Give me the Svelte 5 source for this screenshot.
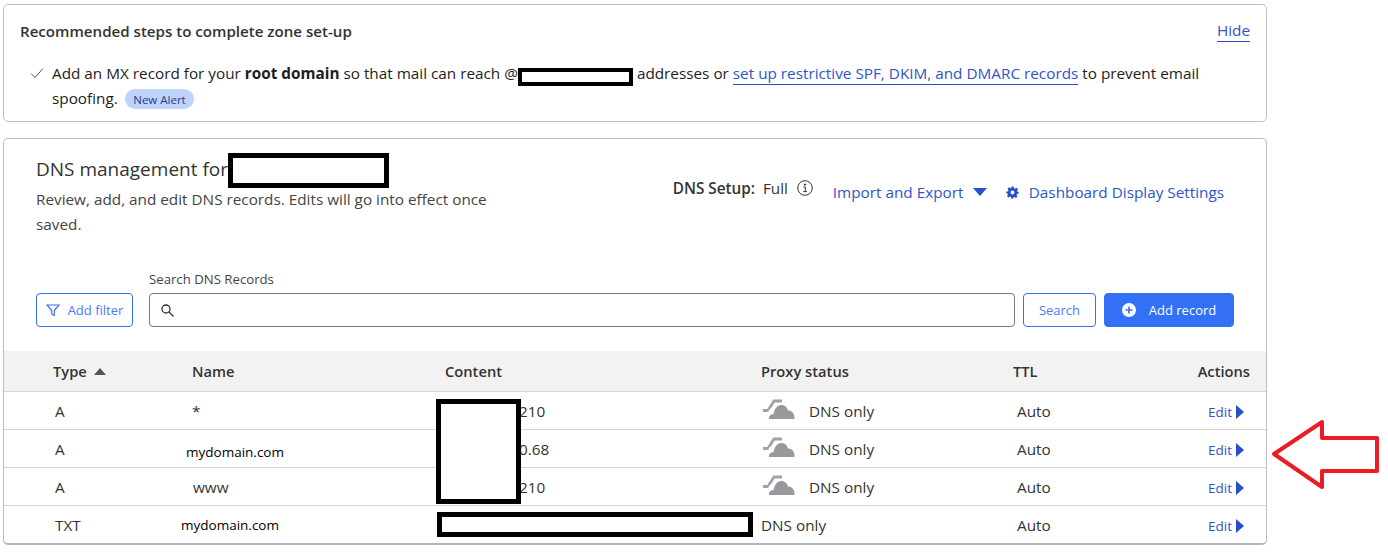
<script>
  const rows = [
    { type: 'A', name: '*', content: '210', proxied: true },
    { type: 'A', name: 'mydomain.com', content: '0.68', proxied: true, pasted: true },
    { type: 'A', name: 'www', content: '210', proxied: true },
    { type: 'TXT', name: 'mydomain.com', content: '', proxied: false, pasted: true, txt: true }
  ];
</script>

<div class="page">
  <section class="card steps">
    <div class="steps-head">
      <h2>Recommended steps to complete zone set-up</h2>
      <a href="#hide" class="link underlined">Hide</a>
    </div>
    <div class="step">
      <svg class="check" width="14" height="12" viewBox="0 0 14 12" fill="none" stroke="#555" stroke-width="1">
        <path d="M1 6.5 L5 10.5 L13 1.5" />
      </svg>
      <p>
        Add an MX record for your <b>root domain</b> so that mail can reach @<span class="hidden-domain"></span> addresses or
        <a href="#spf" class="link underlined">set up restrictive SPF, DKIM, and DMARC records</a> to prevent email
        spoofing. <span class="pill">New Alert</span>
      </p>
    </div>
  </section>

  <section class="card dns">
    <div class="dns-head">
      <div class="intro">
        <h1>DNS management for<span class="redact title-redact"></span></h1>
        <p>Review, add, and edit DNS records. Edits will go into effect once saved.</p>
      </div>
      <div class="head-actions">
        <span class="setup"><b>DNS Setup:</b>&nbsp; Full
          <svg width="16" height="16" viewBox="0 0 16 16" fill="none" stroke="#333" stroke-width="1">
            <circle cx="8" cy="8" r="7.300" />
            <path d="M6.500 7 H8.300 V11.600 M6.300 11.600 H10" />
            <circle cx="8" cy="4.600" r="0.700" fill="#333" />
          </svg>
        </span>
        <a href="#import" class="link action import">Import and Export
          <svg width="14" height="8" viewBox="0 0 14 8"><path d="M0 0 H14 L7 8 Z" fill="#2450c8" /></svg>
        </a>
        <a href="#settings" class="link action settings">
          <svg width="13" height="13" viewBox="0 0 24 24">
            <path fill="#2450c8" fill-rule="evenodd" d="M10 1h4l.7 3.200 1.900.8 2.800-1.800 2.800 2.800-1.800 2.800.8 1.900L23.400 10.400v3.600l-3.200.7-.8 1.900 1.800 2.800-2.800 2.800-2.800-1.800-1.900.8L13 23.400h-3l-.7-3.200-1.900-.8-2.800 1.800-2.800-2.800 1.800-2.800-.8-1.900L.6 14v-3.600l3.200-.7.8-1.900L2.800 5 5.600 2.200l2.800 1.800 1.900-.8zM12 8.500a3.600 3.600 0 1 0 0 7.200 3.600 3.600 0 0 0 0-7.200z" />
          </svg>
          Dashboard Display Settings
        </a>
      </div>
    </div>

    <div class="search-row">
      <button class="btn filter">
        <svg width="14" height="14" viewBox="0 0 14 14" fill="none" stroke="#3a6ff5" stroke-width="1.200">
          <path d="M1 2 H13 L8.300 7.500 V12.500 L5.700 11 V7.500 Z" />
        </svg>
        Add filter
      </button>
      <div class="search-field">
        <label for="search">Search DNS Records</label>
        <div class="input">
          <svg width="15" height="15" viewBox="0 0 15 15" fill="none" stroke="#333" stroke-width="1.300">
            <circle cx="6" cy="6" r="4" />
            <path d="M9 9 L13.500 13.500" />
          </svg>
          <input id="search" type="text" />
        </div>
      </div>
      <button class="btn search">Search</button>
      <button class="btn add">
        <svg width="14" height="14" viewBox="0 0 14 14">
          <circle cx="7" cy="7" r="7" fill="#fff" />
          <path d="M7 3.500 V10.500 M3.500 7 H10.500" stroke="#3370f5" stroke-width="1.600" />
        </svg>
        Add record
      </button>
    </div>

    <div class="table">
      <div class="tr th">
        <span class="type-head">Type <i class="sort"></i></span>
        <span>Name</span>
        <span>Content</span>
        <span>Proxy status</span>
        <span>TTL</span>
        <span class="right">Actions</span>
      </div>
      {#each rows as row}
        <div class="tr td">
          <span class="type">{row.type}</span>
          <span class="name" class:pasted={row.pasted} class:txt={row.txt} class:www={row.name === 'www'}>{row.name}</span>
          <span class="content">{row.content}</span>
          <span class="proxy">
            {#if row.proxied}
              <svg class="cloud" width="32" height="22" viewBox="0 0 32 22">
                <path d="M0 12.500 L5 12.500 L11 3 L19 3" fill="none" stroke="#a0a2a5" stroke-width="2.800" />
                <path fill="#fff" d="M3 22 L6 12 L14 5 L24 6 L32 12 V22 Z" />
                <path fill="#97999c" d="M6 21 C5.500 18 8 16 10.500 16.300 C11.500 11 14 7 18.500 7 C22 7 24.500 9.500 25 12.500 C29 12 32 16 31.500 21 Z" />
              </svg>
            {/if}
            DNS only
          </span>
          <span class="ttl">Auto</span>
          <span class="right edit"><a href="#edit" class="link">Edit</a><i class="caret"></i></span>
        </div>
      {/each}
      <span class="redact ip-redact"></span>
      <span class="redact txt-redact"></span>
    </div>
  </section>

  <svg class="arrow" width="110" height="72" viewBox="0 0 110 72" fill="none" stroke="#ed1c24" stroke-width="4" stroke-linejoin="round">
    <path d="M3 35 L51 3 V19 H106 V52 H51 V68 Z" />
  </svg>
</div>

<style>
  :global(body) {
    margin: 0;
    background: #fff;
  }

  .page {
    position: relative;
    width: 1388px;
    height: 554px;
    padding: 4px 0 0 3px;
    box-sizing: border-box;
    font-family: "Open Sans", "Noto Sans", sans-serif;
    color: #222;
    font-size: 15.300px;
    overflow: hidden;
  }

  .card {
    width: 1264px;
    box-sizing: border-box;
    border: 1px solid #bdbdbd;
    border-radius: 5px;
    background: #fff;
  }

  .link {
    color: #2f55c5;
    text-decoration: none;
  }

  .underlined {
    border-bottom: 1px solid #2450c8;
    padding-bottom: 1px;
  }

  /* Recommended steps */
  .steps {
    height: 118px;
    padding: 16px 16px 0 16px;
  }

  .steps-head {
    display: flex;
    justify-content: space-between;
    align-items: center;
    height: 20px;
  }

  .steps-head h2 {
    margin: 0;
    font-size: 15.100px;
    font-weight: 600;
    color: #333;
  }

  .steps-head a {
    line-height: 20px;
  }

  .step {
    display: flex;
    margin: 20px 0 0 10px;
    gap: 8px;
  }

  .check {
    margin-top: 6px;
    flex: none;
  }

  .step p {
    margin: 0;
    width: 1165px;
    line-height: 24.500px;
    color: #1d1d1d;
  }

  .step b {
    font-weight: 700;
  }

  .hidden-domain {
    display: inline-block;
    box-sizing: border-box;
    width: 115px;
    height: 18px;
    margin-bottom: -7px;
    border: 4px solid #000;
    background: #fff;
  }

  .pill {
    display: inline-block;
    margin-left: 3px;
    padding: 0 8.500px;
    height: 20px;
    line-height: 21px;
    font-size: 11.500px;
    color: #24407f;
    background: #bdd3fb;
    border-radius: 10px;
    vertical-align: 0;
  }

  /* DNS card */
  .dns {
    margin-top: 16px;
    height: 407px;
    position: relative;
    border-bottom: 2px solid #b5b5b5;
  }

  .dns-head {
    display: flex;
    justify-content: space-between;
    padding: 17px 42px 0 32px;
    height: 138px;
    box-sizing: border-box;
  }

  .intro {
    width: 470px;
  }

  .intro h1 {
    margin: 0;
    font-size: 19px;
    font-weight: 400;
    line-height: 26px;
    color: #333;
    position: relative;
  }

  .intro p {
    margin: 5px 0 0;
    line-height: 25px;
    color: #444;
  }

  .redact {
    position: absolute;
    box-sizing: border-box;
    border: 5px solid #000;
    background: #fff;
  }

  .title-redact {
    left: 192px;
    top: -3px;
    width: 161px;
    height: 35px;
  }

  .head-actions {
    display: flex;
    align-items: flex-start;
    padding-top: 22px;
    color: #333;
  }

  .setup {
    display: flex;
    align-items: center;
    white-space: pre;
    height: 20px;
    width: 160px;
  }

  .setup b {
    font-weight: 600;
  }

  .setup svg {
    margin-left: 5px;
  }

  .action {
    display: flex;
    align-items: center;
    height: 28px;
  }

  .import {
    width: 173px;
    gap: 10px;
  }

  .settings {
    gap: 10px;
  }

  .search-row {
    display: flex;
    align-items: flex-end;
    padding-left: 32px;
    height: 50px;
  }

  .btn {
    height: 34px;
    box-sizing: border-box;
    border-radius: 4px;
    font: inherit;
    font-size: 13px;
    display: flex;
    align-items: center;
    justify-content: center;
    background: #fff;
    border: 1px solid #3370f5;
    color: #4a7bf5;
    padding: 0;
  }

  .filter {
    width: 97px;
    gap: 8px;
    margin-right: 16px;
  }

  .search-field {
    position: relative;
    width: 866px;
    margin-right: 8px;
  }

  .search-field label {
    position: absolute;
    left: 0;
    top: -23px;
    font-size: 13.200px;
    color: #444;
  }

  .input {
    display: flex;
    align-items: center;
    height: 34px;
    box-sizing: border-box;
    border: 1px solid #777;
    border-radius: 4px;
    padding-left: 10px;
  }

  .input input {
    border: 0;
    outline: 0;
    flex: 1;
    min-width: 0;
  }

  .search {
    width: 73px;
    margin-right: 8px;
  }

  .add {
    width: 130px;
    gap: 13px;
    background: #3370f5;
    color: #fff;
    font-weight: 500;
  }

  /* Records table */
  .table {
    position: relative;
    margin-top: 24px;
  }

  .tr {
    display: grid;
    grid-template-columns: 139px 253px 316px 252px 1fr 120px;
    align-items: center;
    padding: 0 16px 0 49px;
    box-sizing: border-box;
    border-bottom: 1px solid #d5d5d5;
  }

  .th {
    height: 41px;
    background: #f2f2f2;
    font-size: 14.700px;
    font-weight: 600;
    color: #333;
  }

  .td {
    height: 38px;
    color: #333;
  }

  .td:last-of-type {
    border-bottom: 0;
  }

  .right {
    text-align: right;
  }

  .type-head {
    display: flex;
    align-items: center;
    gap: 7px;
  }

  .sort {
    width: 0;
    height: 0;
    border: 6.500px solid transparent;
    border-top: 0;
    border-bottom: 7px solid #555;
  }

  .type {
    padding-left: 2px;
  }

  .name.www {
    padding-left: 1px;
  }

  .name.pasted {
    margin-left: -6px;
    margin-top: 6px;
    font-size: 13.500px;
    font-weight: 500;
    color: #000;
  }

  .name.txt {
    margin-left: -11px;
    margin-top: 0;
  }

  .content {
    padding-left: 74px;
  }

  .proxy {
    display: flex;
    align-items: center;
    gap: 14px;
  }

  .cloud {
    margin-left: 2px;
    margin-top: -4px;
  }

  .ttl {
    padding-left: 4px;
  }

  .edit {
    display: flex;
    justify-content: flex-end;
    align-items: center;
    gap: 4px;
    font-size: 13.500px;
    padding-right: 6px;
    margin-top: 2px;
  }

  .caret {
    width: 0;
    height: 0;
    border: 7px solid transparent;
    border-right: 0;
    border-left: 8px solid #2450c8;
  }

  .ip-redact {
    left: 432px;
    top: 48px;
    width: 85px;
    height: 105px;
  }

  .txt-redact {
    left: 433px;
    top: 161px;
    width: 316px;
    height: 25px;
  }

  .arrow {
    position: absolute;
    left: 1271px;
    top: 419px;
  }
</style>
